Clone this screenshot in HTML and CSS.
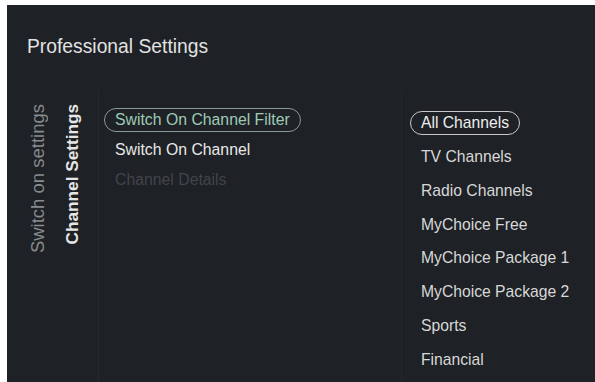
FILE: index.html
```html
<!DOCTYPE html>
<html>
<head>
<meta charset="utf-8">
<link rel="stylesheet" href="styles.css">
</head>
<body>
<div class="panel">
  <div class="header">Professional Settings</div>
  <div class="content">
    <div class="labels">
      <div class="vlabel">Switch on settings</div>
      <div class="vlabel active">Channel Settings</div>
    </div>
    <div class="middle">
      <div class="item selected">Switch On Channel Filter</div>
      <div class="item">Switch On Channel</div>
      <div class="item disabled">Channel Details</div>
    </div>
    <div class="right">
      <div class="ritem selected">All Channels</div>
      <div class="ritem">TV Channels</div>
      <div class="ritem">Radio Channels</div>
      <div class="ritem">MyChoice Free</div>
      <div class="ritem">MyChoice Package 1</div>
      <div class="ritem">MyChoice Package 2</div>
      <div class="ritem">Sports</div>
      <div class="ritem">Financial</div>
    </div>
  </div>
</div>
</body>
</html>
```
FILE: styles.css
```css
html, body {
  margin: 0;
  padding: 0;
  background: #ffffff;
  width: 595px;
  height: 382px;
  overflow: hidden;
}
.panel {
  margin: 5px 0 0 7px;
  width: 588px;
  height: 377px;
  background: #1e2125;
  font-family: "Liberation Sans", Arial, sans-serif;
  color: #dcdcdc;
  display: flex;
  flex-direction: column;
}
.header {
  height: 85px;
  padding: 31px 0 0 20px;
  box-sizing: border-box;
  font-size: 19.3px;
  color: #e2e2e2;
}
.content {
  flex: 1;
  display: flex;
}
.labels {
  width: 91px;
  display: flex;
  gap: 12px;
  padding: 14px 0 0 20px;
  box-sizing: border-box;
  align-items: flex-start;
}
.vlabel {
  writing-mode: vertical-rl;
  transform: rotate(180deg);
  font-size: 18.5px;
  color: #888b8e;
  line-height: 22px;
}
.vlabel.active {
  color: #e6e6e6;
  font-weight: bold;
  font-size: 17.2px;
}
.middle {
  width: 304px;
  border-left: 1px solid #25282c;
  border-right: 1px solid #25282c;
  padding: 18px 0 0 5px;
  box-sizing: border-box;
  display: flex;
  flex-direction: column;
  gap: 6px;
  align-items: flex-start;
}
.item {
  font-size: 15.8px;
  height: 22px;
  line-height: 22px;
  padding: 0 10px;
  border: 1px solid transparent;
  border-radius: 12px;
  color: #e8e8e8;
}
.item.selected {
  border-color: #8a9a94;
  color: #9ecab6;
}
.item.disabled {
  color: #41454a;
}
.right {
  flex: 1;
  padding: 21px 0 0 8px;
  box-sizing: border-box;
  display: flex;
  flex-direction: column;
  gap: 9.85px;
  align-items: flex-start;
}
.ritem {
  font-size: 15.7px;
  height: 22px;
  line-height: 22px;
  padding: 0 10px;
  border: 1px solid transparent;
  border-radius: 12px;
  color: #d8d8d8;
}
.ritem.selected {
  border-color: #c8c8c8;
  color: #eeeeee;
}
```
